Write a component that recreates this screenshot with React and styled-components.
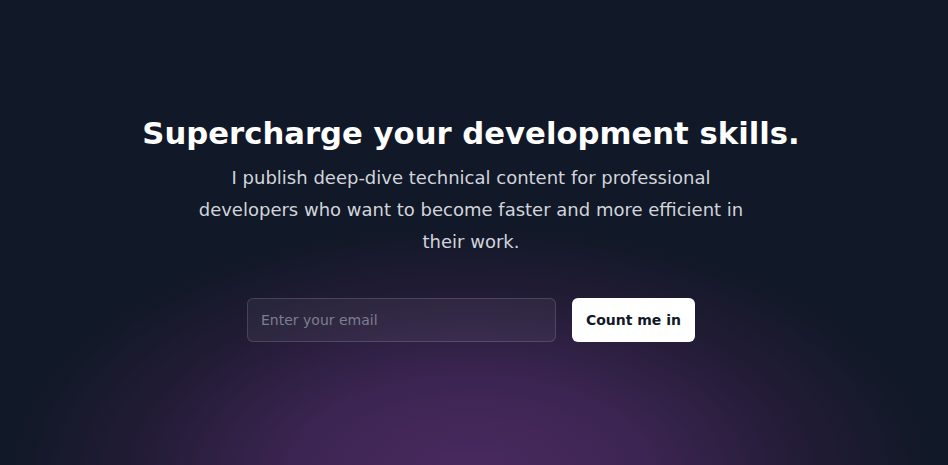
import React from 'react'
import styled, { createGlobalStyle } from 'styled-components'

const GlobalStyle = createGlobalStyle`
  html, body {
    margin: 0;
    padding: 0;
    background: #111827;
  }
  * {
    box-sizing: border-box;
  }
`

const Section = styled.section`
  height: 465px;
  overflow: hidden;
  padding: 114px 6px 0 0;
  background:
    radial-gradient(ellipse 460px 250px at 471px 475px,
      rgba(74, 42, 96, 1) 0%,
      rgba(64, 38, 86, 0.92) 38%,
      rgba(44, 30, 62, 0.65) 72%,
      rgba(17, 24, 39, 0) 100%),
    #111827;
  font-family: 'DejaVu Sans', sans-serif;
  display: flex;
  flex-direction: column;
  align-items: center;
`

const Title = styled.h2`
  margin: 0;
  font-size: 30.7px;
  line-height: 40px;
  font-weight: 700;
  color: #ffffff;
  text-align: center;
`

const Lead = styled.p`
  margin: 8px 0 0;
  max-width: 576px;
  font-size: 18px;
  line-height: 32px;
  color: #d1d5db;
  text-align: center;
`

const Form = styled.form`
  margin-top: 40px;
  width: 448px;
  display: flex;
  gap: 16px;
`

const EmailInput = styled.input`
  flex: 1 1 auto;
  min-width: 0;
  height: 44px;
  padding: 0 13px;
  border: 1px solid rgba(255, 255, 255, 0.14);
  border-radius: 6px;
  background: rgba(255, 255, 255, 0.05);
  color: #ffffff;
  font-family: inherit;
  font-size: 14px;
  outline: none;

  &::placeholder {
    color: #7c7f8e;
  }
`

const Button = styled.button`
  flex: none;
  height: 44px;
  padding: 0 14px;
  border: none;
  border-radius: 6px;
  background: #ffffff;
  color: #111827;
  font-family: inherit;
  font-size: 14px;
  font-weight: 700;
  cursor: pointer;
`

export default function App() {
  return (
    <>
      <GlobalStyle />
      <Section>
        <Title>Supercharge your development skills.</Title>
        <Lead>
          I publish deep-dive technical content for professional developers who
          want to become faster and more efficient in their work.
        </Lead>
        <Form onSubmit={e => e.preventDefault()}>
          <EmailInput type="email" placeholder="Enter your email" />
          <Button type="submit">Count me in</Button>
        </Form>
      </Section>
    </>
  )
}
